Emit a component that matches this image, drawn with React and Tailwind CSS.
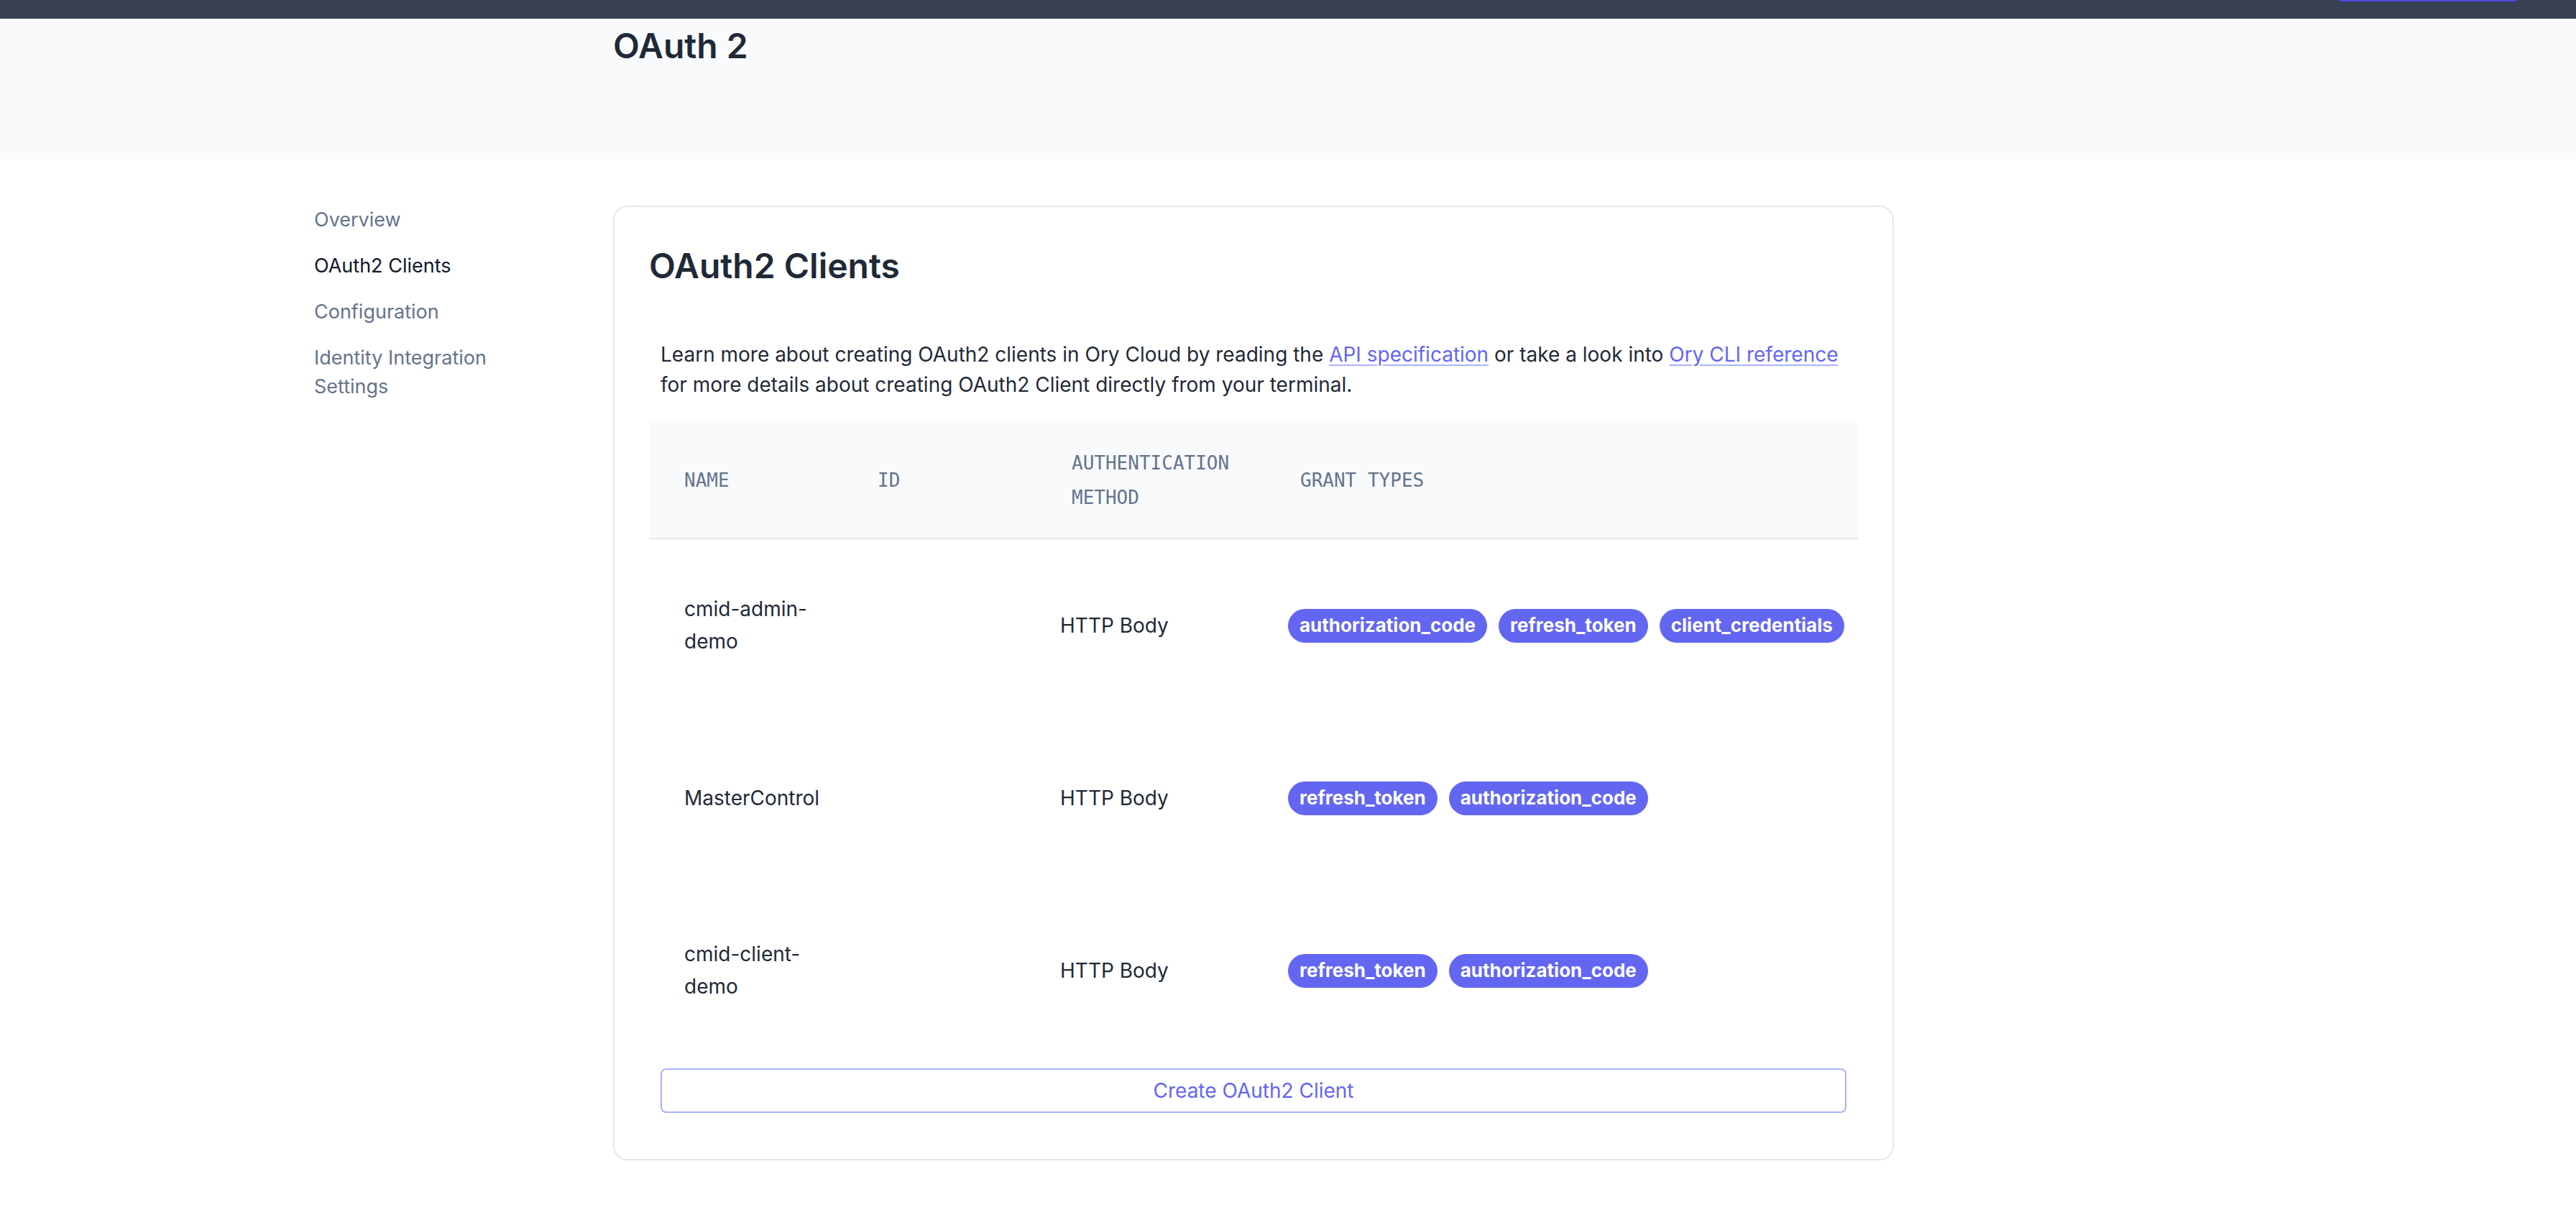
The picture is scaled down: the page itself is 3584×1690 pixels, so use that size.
import React from 'react';

// --- Data ---

const navItems = [
  { label: 'Overview', active: false },
  { label: 'OAuth2 Clients', active: true },
  { label: 'Configuration', active: false },
  { label: 'Identity Integration Settings', active: false },
];

const clients = [
  { name: 'cmid-admin-demo', auth: 'HTTP Body', grants: ['authorization_code', 'refresh_token', 'client_credentials'] },
  { name: 'MasterControl', auth: 'HTTP Body', grants: ['refresh_token', 'authorization_code'] },
  { name: 'cmid-client-demo', auth: 'HTTP Body', grants: ['refresh_token', 'authorization_code'] },
];

// --- Sub-components ---

const GrantBadge = ({ label }) => (
  <span className="h-[47px] flex items-center px-[16px] rounded-full bg-[#6366f1] text-white text-[26px] font-bold leading-none">
    {label}
  </span>
);

const Sidebar = () => (
  <nav className="w-[416px] shrink-0 flex flex-col gap-[24px]">
    {navItems.map((item) => (
      <a
        key={item.label}
        href="#"
        className={`w-[290px] text-[27px] leading-[40px] ${item.active ? 'text-[#0f172a]' : 'text-[#64748b]'}`}
      >
        {item.label}
      </a>
    ))}
  </nav>
);

const ClientsTable = () => (
  <div className="mt-[32px]">
    <div className="grid grid-cols-[270px_270px_317px_1fr] bg-[#f8fafc] border-b-2 border-[#e5e7eb] py-[32px] items-center font-['DejaVu_Sans_Mono',monospace] text-[26px] leading-[48px] text-[#64748b]">
      <div className="pl-[49px]">NAME</div>
      <div className="pl-[48px]">ID</div>
      <div className="pl-[48px] pr-[40px]">AUTHENTICATION METHOD</div>
      <div className="pl-[49px]">GRANT TYPES</div>
    </div>
    {clients.map((c) => (
      <div key={c.name} className="grid grid-cols-[270px_270px_317px_1fr] h-[240px] items-center text-[28px] leading-[42px] text-[#1f2937]">
        <div className="pl-[49px] pr-[24px] leading-[45px]">{c.name}</div>
        <div></div>
        <div className="pl-[32px]">{c.auth}</div>
        <div className="pl-[32px] flex gap-[16px]">
          {c.grants.map((g) => (
            <GrantBadge key={g} label={g} />
          ))}
        </div>
      </div>
    ))}
    <div className="p-[16px] pt-[16px]">
      <button className="w-full h-[62px] rounded-[8px] border-2 border-[#a5b4fc] text-[#6366f1] text-[28px] bg-white">
        Create OAuth2 Client
      </button>
    </div>
  </div>
);

// --- Main page ---

export default function App() {
  return (
    <div className="h-[1690px] bg-white font-['Inter','Noto_Sans',sans-serif] overflow-hidden">
      <div className="h-[26px] bg-[#374151] flex justify-end pr-[82px]">
        <div className="w-[248px] h-[2px] rounded-b-[4px] bg-[#4f46e5]"></div>
      </div>

      <header className="h-[196px] bg-[#f8fafc] pl-[853px] pt-[4px]">
        <h1 className="text-[48px] leading-[68px] font-semibold text-[#1f2937]">OAuth 2</h1>
      </header>

      <main className="flex pl-[437px] pt-[64px]">
        <Sidebar />
        <section className="w-[1782px] bg-white border-2 border-[#e5e7eb] rounded-[20px] p-[48px]">
          <h2 className="text-[48px] leading-[68px] font-semibold text-[#1f2937]">OAuth2 Clients</h2>
          <p className="mt-[68px] px-[16px] text-[28px] leading-[42px] text-[#1f2937]">
            Learn more about creating OAuth2 clients in Ory Cloud by reading the{' '}
            <a href="#" className="text-[#6366f1] underline decoration-[#a5b4fc] underline-offset-[4px]">API specification</a>
            {' '}or take a look into{' '}
            <a href="#" className="text-[#6366f1] underline decoration-[#a5b4fc] underline-offset-[4px]">Ory CLI reference</a>
            {' '}for more details about creating OAuth2 Client directly from your terminal.
          </p>
          <ClientsTable />
        </section>
      </main>
    </div>
  );
}
